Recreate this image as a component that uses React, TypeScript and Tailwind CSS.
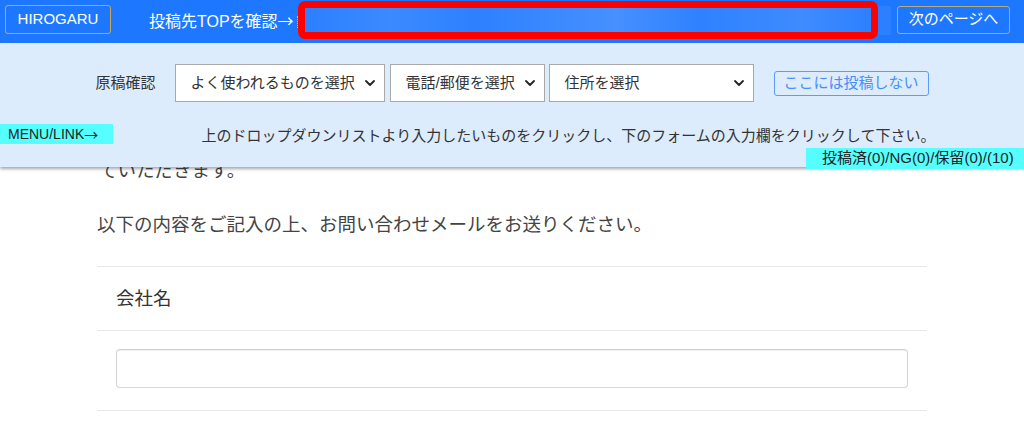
import React from "react";

const jp = { fontFamily: '"Liberation Sans", "Noto Sans CJK JP", sans-serif' };
const cjk = { fontFamily: '"Noto Sans CJK JP", sans-serif' };

function Chevron() {
  return (
    <svg width="12" height="8" viewBox="0 0 12 8" className="shrink-0">
      <path d="M2 2 L6 6 L10 2" fill="none" stroke="#222" strokeWidth="1.8" strokeLinecap="round" strokeLinejoin="round" />
    </svg>
  );
}

function FakeSelect({ label, width }: { label: string; width: string }) {
  return (
    <div className={`${width} h-[38px] bg-white border border-[#a9a9a9] flex items-center justify-between pl-[15px] pr-[8px] text-[15px] text-[#333]`}>
      <span>{label}</span>
      <Chevron />
    </div>
  );
}

function TopBar() {
  return (
    <div className="h-[43px] bg-[#1e78ff] flex items-center text-white">
      <div className="ml-[5px] mt-[-5px] w-[106px] h-[29px] border border-[#c9a851] rounded-[3px] flex items-center justify-center text-[15px]">
        HIROGARU
      </div>
      <div className="ml-[38px] w-[148px] text-[16px] whitespace-nowrap mt-[-2px]">
        投稿先TOPを確認<span style={cjk}>→</span>
      </div>
      <div className="w-[3px] h-[12px] border-l border-dotted border-[#9cc3ff]" />
      <div className="relative ml-[-2px] mt-[-3px] w-[580px] h-[38px] rounded-[7px] border-[7px] border-[#ff0000] bg-[#2f81ff] overflow-hidden">
        <div className="absolute inset-0 bg-[linear-gradient(90deg,#2c7fff_0%,#3b8aff_15%,#2e80ff_30%,#4690ff_55%,#2f81ff_70%,#3f8bff_88%,#2e80ff_100%)]" />
      </div>
      <div className="w-[13px] h-[29px] bg-[#2c80ff] mt-[-3px]" />
      <div className="ml-[6px] mt-[-4px] w-[113px] h-[28px] border border-[#b7ab82] rounded-[3px] flex items-center justify-center text-[15px]">
        次のページへ
      </div>
    </div>
  );
}

function ControlPanel() {
  return (
    <div className="h-[124px] bg-[#dcecfd] shadow-[0_2px_3px_rgba(0,0,0,0.35)] flex flex-col">
      <div className="flex items-center justify-center mt-[21px]">
        <span className="text-[15px] text-[#333] mr-[19px]">原稿確認</span>
        <FakeSelect label="よく使われるものを選択" width="w-[210px]" />
        <div className="w-[5px]" />
        <FakeSelect label="電話/郵便を選択" width="w-[155px]" />
        <div className="w-[4px]" />
        <FakeSelect label="住所を選択" width="w-[205px]" />
        <div className="ml-[20px] h-[25px] px-[9px] border border-[#5a9cf8] rounded-[3px] flex items-center text-[15px] text-[#4a8ef5]">
          ここには投稿しない
        </div>
      </div>
      <div className="flex items-center mt-[19px]">
        <div className="w-[113px] h-[20px] bg-[#55ffff] flex items-center pl-[8px] text-[14px] text-[#222] whitespace-nowrap">
          MENU/LINK<span style={cjk}>→</span>
        </div>
        <div className="flex-1 text-center text-[15px] text-[#333] whitespace-nowrap mt-[4px]">
          上のドロップダウンリストより入力したいものをクリックし、下のフォームの入力欄をクリックして下さい。
        </div>
      </div>
      <div className="flex justify-end mt-auto">
        <div className="w-[218px] h-[21px] bg-[#55ffff] flex items-center pl-[16px] text-[15px] text-[#222] whitespace-nowrap">
          投稿済(0)/NG(0)/保留(0)/(10)
        </div>
      </div>
    </div>
  );
}

export default function App() {
  return (
    <div className="relative w-[1024px] h-[424px] overflow-hidden bg-white" style={jp}>
      <div className="w-[830px] mx-auto pt-[157px] text-[#444]">
        <p className="text-[18.5px] leading-[28px] pl-[2px]">ていただきます。</p>
        <p className="text-[18.5px] leading-[28px] mt-[26px]">以下の内容をご記入の上、お問い合わせメールをお送りください。</p>
        <div className="mt-[27px] border-t border-[#e8e8e8]">
          <div className="h-[63px] flex items-center pl-[19px] text-[18.5px] text-[#333]">会社名</div>
          <div className="border-t border-[#e8e8e8] pt-[18px] pb-[22px] px-[19px]">
            <div className="h-[39px] rounded-[4px] border border-[#d6d6d6] border-t-[#cfcfcf] shadow-[inset_0_1px_1px_rgba(0,0,0,0.06)]" />
          </div>
          <div className="border-t border-[#e8e8e8]" />
        </div>
      </div>
      <div className="absolute top-0 left-0 right-0">
        <TopBar />
        <ControlPanel />
      </div>
    </div>
  );
}
